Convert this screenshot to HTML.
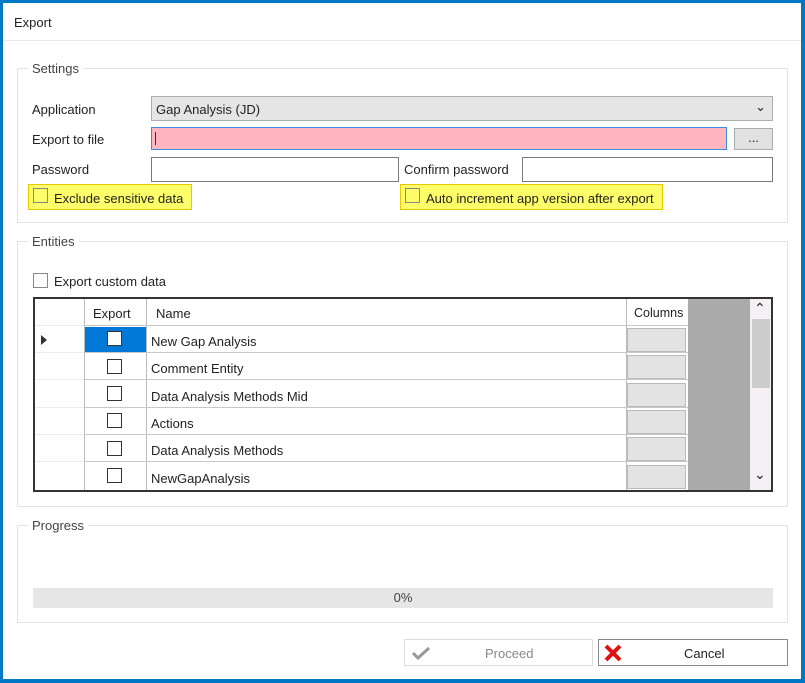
<!DOCTYPE html><html><head><style>
*{box-sizing:border-box;margin:0;padding:0}
body{width:805px;height:683px;background:#0078c8;font-family:"Liberation Sans",sans-serif;font-size:13px;color:#222;position:relative;overflow:hidden}
.win{position:absolute;left:3px;top:3px;width:798px;height:676px;background:#fff}
.a{position:absolute}
.t{position:absolute;margin-top:1px}
.grp{position:absolute;border:1px solid #e3e3e3}
.lg{position:absolute;background:#fff;padding:0 4px;color:#444}
.inp{position:absolute;border:1px solid #7a7a7a;background:#fff}
.cb{position:absolute;width:15px;height:15px;border:1px solid #333;background:#fff}
.hl{position:absolute;background:#fdfd6a;border:1px solid #e8c800}
.hl .cb{background:#fdfd6a;border-color:#888;left:4px;top:3px}
.row{position:absolute;left:84px;width:604px;height:27px;border-bottom:1px solid #c8c8c8}
.rh{position:absolute;left:35px;width:49px;height:27px;border-bottom:1px solid #ececec}
</style></head><body><div class="win">
<div class="a" style="left:11px;top:12px">Export</div>
<div class="a" style="left:0;top:37px;width:798px;height:1px;background:#e8e8e8"></div>
</div>
<div class="grp" style="left:17px;top:68px;width:771px;height:155px"></div>
<div class="lg" style="left:28px;top:61px">Settings</div>
<div class="t" style="left:32px;top:101px">Application</div>
<div class="a" style="left:151px;top:96px;width:622px;height:25px;background:#e5e5e5;border:1px solid #adadad;padding:5px 4px">Gap Analysis (JD)<span style="position:absolute;right:6px;top:2px;font-size:13px">&#8964;</span></div>
<div class="t" style="left:32px;top:131px">Export to file</div>
<div class="a" style="left:151px;top:127px;width:576px;height:23px;background:#ffb6c1;border:1px solid #3c8ee0"><div style="position:absolute;left:3px;top:4px;width:1px;height:13px;background:#333"></div></div>
<div class="a" style="left:734px;top:128px;width:39px;height:22px;background:#e1e1e1;border:1px solid #adadad;text-align:center;line-height:18px">...</div>
<div class="t" style="left:32px;top:161px">Password</div>
<div class="inp" style="left:151px;top:157px;width:248px;height:25px"></div>
<div class="t" style="left:404px;top:161px">Confirm password</div>
<div class="inp" style="left:522px;top:157px;width:251px;height:25px"></div>
<div class="hl" style="left:28px;top:184px;width:164px;height:26px"><div class="cb"></div><span class="a" style="left:25px;top:6px">Exclude sensitive data</span></div>
<div class="hl" style="left:400px;top:184px;width:263px;height:26px"><div class="cb"></div><span class="a" style="left:25px;top:6px">Auto increment app version after export</span></div>

<div class="grp" style="left:17px;top:241px;width:771px;height:266px"></div>
<div class="lg" style="left:28px;top:234px">Entities</div>
<div class="cb" style="left:33px;top:273px;border-color:#888"></div>
<div class="t" style="left:54px;top:273px">Export custom data</div>
<div class="a" style="left:33px;top:297px;width:740px;height:195px;border:2px solid #333;background:#fff"></div>
<div class="a" style="left:688px;top:299px;width:62px;height:191px;background:#ababab"></div>
<div class="a" style="left:750px;top:299px;width:21px;height:191px;background:#f4f0f4"></div>
<div class="a" style="left:752px;top:319px;width:18px;height:69px;background:#cdcdcd"></div>
<div class="a" style="left:754px;top:300px;font-size:14px">&#8963;</div>
<div class="a" style="left:754px;top:466px;font-size:14px">&#8964;</div>
<div class="row" style="top:299px;height:27px"><span class="a" style="left:9px;top:7px">Export</span><span class="a" style="left:72px;top:7px">Name</span><span class="a" style="left:550px;top:7px;font-size:12.5px">Columns</span></div>
<div class="rh" style="top:299px"></div>
<div class="a" style="left:84px;top:299px;width:1px;height:191px;background:#bbb"></div>
<div class="a" style="left:146px;top:299px;width:1px;height:191px;background:#bbb"></div>
<div class="a" style="left:626px;top:299px;width:1px;height:191px;background:#bbb"></div>
<div class="a" style="left:85px;top:327px;width:61px;height:26px;background:#0078d7"></div>
<div class="a" style="left:41px;top:335px;width:0;height:0;border-left:6px solid #333;border-top:5px solid transparent;border-bottom:5px solid transparent"></div>

<div class="row" style="top:326px"></div><div class="row" style="top:353px"></div><div class="row" style="top:381px"></div><div class="row" style="top:408px"></div><div class="row" style="top:435px"></div><div class="row" style="top:463px;border:0"></div>
<div class="rh" style="top:326px"></div><div class="rh" style="top:353px"></div><div class="rh" style="top:381px"></div><div class="rh" style="top:408px"></div><div class="rh" style="top:435px"></div>
<div class="cb" style="left:107px;top:331px"></div><div class="t" style="left:151px;top:333px">New Gap Analysis</div>
<div class="cb" style="left:107px;top:359px"></div><div class="t" style="left:151px;top:360px">Comment Entity</div>
<div class="cb" style="left:107px;top:386px"></div><div class="t" style="left:151px;top:388px">Data Analysis Methods Mid</div>
<div class="cb" style="left:107px;top:413px"></div><div class="t" style="left:151px;top:415px">Actions</div>
<div class="cb" style="left:107px;top:441px"></div><div class="t" style="left:151px;top:442px">Data Analysis Methods</div>
<div class="cb" style="left:107px;top:468px"></div><div class="t" style="left:151px;top:470px">NewGapAnalysis</div>
<div class="a" style="left:627px;top:328px;width:59px;height:24px;background:#e3e3e3;border:1px solid #bbb"></div>
<div class="a" style="left:627px;top:355px;width:59px;height:24px;background:#e3e3e3;border:1px solid #bbb"></div>
<div class="a" style="left:627px;top:383px;width:59px;height:24px;background:#e3e3e3;border:1px solid #bbb"></div>
<div class="a" style="left:627px;top:410px;width:59px;height:24px;background:#e3e3e3;border:1px solid #bbb"></div>
<div class="a" style="left:627px;top:437px;width:59px;height:24px;background:#e3e3e3;border:1px solid #bbb"></div>
<div class="a" style="left:627px;top:465px;width:59px;height:24px;background:#e3e3e3;border:1px solid #bbb"></div>

<div class="grp" style="left:17px;top:525px;width:771px;height:98px"></div>
<div class="lg" style="left:28px;top:518px">Progress</div>
<div class="a" style="left:33px;top:588px;width:740px;height:20px;background:#e6e6e6;text-align:center;line-height:20px;color:#444">0%</div>

<div class="a" style="left:404px;top:639px;width:189px;height:27px;border:1px solid #ddd;background:#fff"><svg class="a" style="left:6px;top:6px" width="20" height="14"><path d="M2 7 L7 12 L18 2" stroke="#999" stroke-width="3" fill="none"/></svg><span class="a" style="left:80px;top:6px;color:#888">Proceed</span></div>
<div class="a" style="left:598px;top:639px;width:190px;height:27px;border:1px solid #888;background:#fff"><svg class="a" style="left:5px;top:4px" width="18" height="18"><path d="M2 2 L16 16 M16 2 L2 16" stroke="#e01010" stroke-width="4"/></svg><span class="a" style="left:85px;top:6px">Cancel</span></div>
</body></html>
